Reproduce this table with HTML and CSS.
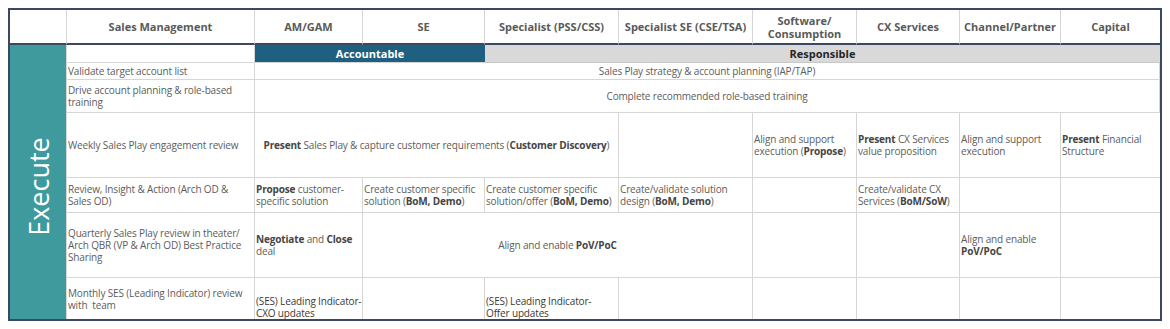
FILE: index.html
```html
<!DOCTYPE html>
<html lang="en">
<head>
<meta charset="utf-8">
<title>Execute - Sales Play RACI</title>
<link rel="stylesheet" href="styles.css">
</head>
<body>
<div class="sheet">
  <div class="hd"></div>
  <div class="hd"><span>Sales Management</span></div>
  <div class="hd"><span>AM/GAM</span></div>
  <div class="hd"><span>SE</span></div>
  <div class="hd"><span>Specialist (PSS/CSS)</span></div>
  <div class="hd"><span>Specialist SE (CSE/TSA)</span></div>
  <div class="hd"><span>Software/<br>Consumption</span></div>
  <div class="hd"><span>CX Services</span></div>
  <div class="hd"><span>Channel/Partner</span></div>
  <div class="hd last"><span>Capital</span></div>

  <div class="phase"><span>Execute</span></div>
  <div class="c"></div>
  <div class="c acc span2"><span>Accountable</span></div>
  <div class="c resp span6"><span>Responsible</span></div>

  <div class="c"><span>Validate target account list</span></div>
  <div class="c ctr span8"><span>Sales Play strategy &amp; account planning (IAP/TAP)</span></div>

  <div class="c"><span>Drive account planning &amp; role-based<br>training</span></div>
  <div class="c ctr span8"><span>Complete recommended role-based training</span></div>

  <div class="c"><span>Weekly Sales Play engagement review</span></div>
  <div class="c ctr span3"><span><b>Present</b> Sales Play &amp; capture customer requirements (<b>Customer Discovery</b>)</span></div>
  <div class="c"></div>
  <div class="c"><span>Align and support<br>execution (<b>Propose</b>)</span></div>
  <div class="c"><span><b>Present</b> CX Services<br>value proposition</span></div>
  <div class="c"><span>Align and support<br>execution</span></div>
  <div class="c last"><span><b>Present</b> Financial<br>Structure</span></div>

  <div class="c"><span>Review, Insight &amp; Action (Arch OD &amp;<br>Sales OD)</span></div>
  <div class="c"><span><b>Propose</b> customer-<br>specific solution</span></div>
  <div class="c"><span>Create customer specific<br>solution (<b>BoM, Demo</b>)</span></div>
  <div class="c"><span>Create customer specific<br>solution/offer (<b>BoM, Demo</b>)</span></div>
  <div class="c"><span>Create/validate solution<br>design (<b>BoM, Demo</b>)</span></div>
  <div class="c"></div>
  <div class="c"><span>Create/validate CX<br>Services (<b>BoM/SoW</b>)</span></div>
  <div class="c"></div>
  <div class="c last"></div>

  <div class="c"><span>Quarterly Sales Play review in theater/<br>Arch QBR (VP &amp; Arch OD) Best Practice<br>Sharing</span></div>
  <div class="c"><span><b>Negotiate</b> and <b>Close</b><br>deal</span></div>
  <div class="c ctr span3"><span>Align and enable <b>PoV/PoC</b></span></div>
  <div class="c"></div>
  <div class="c"></div>
  <div class="c"><span>Align and enable<br><b>PoV/PoC</b></span></div>
  <div class="c last"></div>

  <div class="c btm"><span>Monthly SES (Leading Indicator) review<br>with&nbsp; team</span></div>
  <div class="c btm end dark"><span>(SES) Leading Indicator-<br>CXO updates</span></div>
  <div class="c btm"></div>
  <div class="c btm end dark"><span>(SES) Leading Indicator-<br>Offer updates</span></div>
  <div class="c btm"></div>
  <div class="c btm"></div>
  <div class="c btm"></div>
  <div class="c btm"></div>
  <div class="c btm last"></div>
</div>
</body>
</html>
```
FILE: styles.css
```css
html, body {
  margin: 0;
  padding: 0;
  background: #ffffff;
}

body {
  padding: 8px 0 0 8px;
  font-family: "Open Sans", "Liberation Sans", sans-serif;
}

.sheet {
  width: 1150px;
  border: 2px solid #3a4862;
  display: grid;
  grid-template-columns: 57px 188px 108px 122px 134px 134px 104px 103px 101px 99px;
  grid-template-rows: 35px 18px 17px 33px 65px 35px 65px 41px;
  background: #ffffff;
}

.hd {
  box-sizing: border-box;
  border-right: 1px solid #d6d6d6;
  border-bottom: 2px solid #3a4862;
  display: flex;
  align-items: center;
  justify-content: center;
  text-align: center;
  font-weight: 700;
  font-size: 11px;
  line-height: 13px;
  color: #5a5a5a;
  white-space: nowrap;
}

.hd.last,
.c.last {
  border-right: none;
}

.phase {
  grid-row: span 7;
  background: #3f9a9d;
  border-right: 1px solid #d6d6d6;
  display: flex;
  align-items: center;
  justify-content: center;
  overflow: hidden;
}

.phase span {
  display: block;
  transform: rotate(-90deg);
  color: #ffffff;
  font-size: 27px;
  font-weight: 400;
  white-space: nowrap;
  margin-top: 8px;
}

.c {
  box-sizing: border-box;
  border-right: 1px solid #d6d6d6;
  border-bottom: 1px solid #d6d6d6;
  display: flex;
  align-items: center;
  padding: 0 1px;
  font-size: 10px;
  line-height: 12px;
  color: #5c5c5c;
  letter-spacing: -0.15px;
  white-space: nowrap;
  overflow: hidden;
}

.c > span {
  display: block;
}

.c b {
  font-weight: 700;
  color: #454545;
}

.c.btm {
  border-bottom: none;
}

.c.end {
  align-items: flex-end;
}

.c.dark {
  color: #3a3a3a;
}

.ctr {
  justify-content: center;
  text-align: center;
}

.span2 { grid-column: span 2; }
.span3 { grid-column: span 3; }
.span6 { grid-column: span 6; }
.span8 { grid-column: span 8; }

.acc {
  background: #1f5f80;
  color: #ffffff;
  font-weight: 700;
  font-size: 11px;
  letter-spacing: 0;
  justify-content: center;
  border-right: none;
}

.resp {
  background: #d9d9d9;
  color: #262626;
  font-weight: 700;
  font-size: 11px;
  letter-spacing: 0;
  justify-content: center;
  border-right: none;
  border-bottom: 1px solid #c8c8c8;
}
```
